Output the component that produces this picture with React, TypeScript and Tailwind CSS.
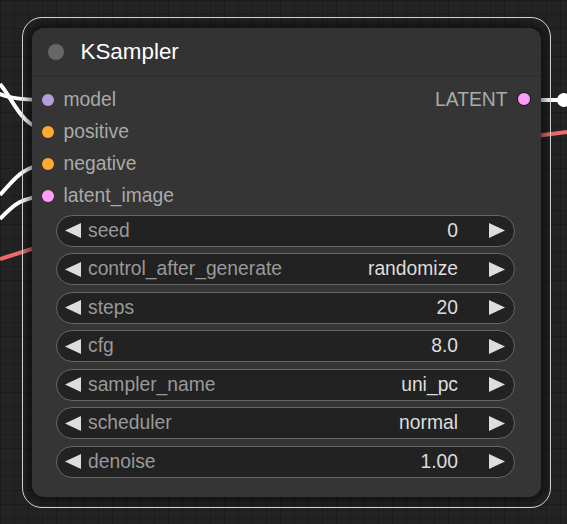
const inputs = [
  { name: "model", color: "bg-[#b39ddb]" },
  { name: "positive", color: "bg-[#ffa931]" },
  { name: "negative", color: "bg-[#ffa931]" },
  { name: "latent_image", color: "bg-[#ff9cf9]" },
];

const widgets = [
  { name: "seed", value: "0" },
  { name: "control_after_generate", value: "randomize" },
  { name: "steps", value: "20" },
  { name: "cfg", value: "8.0" },
  { name: "sampler_name", value: "uni_pc" },
  { name: "scheduler", value: "normal" },
  { name: "denoise", value: "1.00" },
];

function Arrow({ dir }: { dir: "left" | "right" }) {
  return (
    <svg width="16" height="15" viewBox="0 0 16 15" className="shrink-0">
      {dir === "left" ? (
        <polygon points="0,7.5 16,0 16,15" fill="#dddddd" />
      ) : (
        <polygon points="16,7.5 0,0 0,15" fill="#dddddd" />
      )}
    </svg>
  );
}

function Wires() {
  return (
    <svg className="absolute inset-0" width="567" height="524" viewBox="0 0 567 524" fill="none">
      <path d="M -10 90 C 6 97, 14 100, 48 100" stroke="#ffffff" strokeWidth="4" />
      <path d="M 0 84 C 14 100, 20 126, 48 131" stroke="#ffffff" strokeWidth="4" />
      <path d="M 0 195 C 14 180, 22 166, 48 164" stroke="#ffffff" strokeWidth="4" />
      <path d="M 0 219 C 14 204, 22 197, 48 196" stroke="#ffffff" strokeWidth="4" />
      <path d="M 0 259 L 48 244" stroke="#ee6b6b" strokeWidth="4" />
      <path d="M 524 100 L 562 100" stroke="#ffffff" strokeWidth="4" />
      <circle cx="564" cy="100" r="7" fill="#ffffff" />
      <path d="M 520 138 L 567 132" stroke="#ee6b6b" strokeWidth="4" />
    </svg>
  );
}

export default function App() {
  return (
    <div
      className="relative w-[567px] h-[524px] overflow-hidden bg-[#232323] bg-[linear-gradient(#1c1c1c_1px,transparent_1px),linear-gradient(90deg,#1c1c1c_1px,transparent_1px)] bg-[size:14px_14px]"
      style={{ fontFamily: '"Liberation Sans", Arial, sans-serif' }}
    >
      <Wires />
      <div className="relative pt-[17px] pl-[22px]">
        <div className="w-[529px] h-[491px] rounded-[20px] border-[1.5px] border-[#dcdcdc] pt-[9.5px] pl-[8.5px]">
          <div className="w-[509px] h-[469px] rounded-[12px] bg-[#353535] shadow-[0_0_10px_4px_rgba(0,0,0,0.55)] flex flex-col">
            {/* title */}
            <div className="h-[49px] shrink-0 flex items-center pl-[16px] gap-[17px] rounded-t-[12px] bg-[#333333] border-b border-[#2c2c2c]">
              <div className="w-[16px] h-[16px] rounded-full bg-[#666666]" />
              <span className="mt-[1px] text-[22.4px] text-white leading-none">KSampler</span>
            </div>

            {/* slots */}
            <div className="pt-[7px] flex flex-col">
              {inputs.map((inp, i) => (
                <div key={inp.name} className="h-[32px] flex items-center pl-[10px] pr-[10px]">
                  <div className={`w-[12px] h-[12px] rounded-full ${inp.color}`} />
                  <span className="ml-[10px] text-[19.3px] text-[#aaaaaa] leading-none">{inp.name}</span>
                  {i === 0 && (
                    <div className="ml-auto flex items-center gap-[9px]">
                      <span className="text-[19.3px] text-[#aaaaaa] leading-none">LATENT</span>
                      <div className="w-[14px] h-[14px] rounded-full bg-[#ff9cf9] border-[1.5px] border-[#111111]" />
                    </div>
                  )}
                </div>
              ))}
            </div>

            {/* widgets */}
            <div className="mt-[3px] ml-[24px] w-[459px] flex flex-col gap-[6.5px]">
              {widgets.map((w) => (
                <div
                  key={w.name}
                  className="h-[32px] rounded-full border-[1.5px] border-[#666666] bg-[#222222] flex items-center pl-[8.5px] pr-[8.5px]"
                >
                  <Arrow dir="left" />
                  <span className="ml-[7px] text-[19.3px] text-[#999999] leading-none">{w.name}</span>
                  <span className="ml-auto text-[19.3px] text-[#dddddd] leading-none">{w.value}</span>
                  <span className="ml-[31px] flex">
                    <Arrow dir="right" />
                  </span>
                </div>
              ))}
            </div>
          </div>
        </div>
      </div>
    </div>
  );
}
